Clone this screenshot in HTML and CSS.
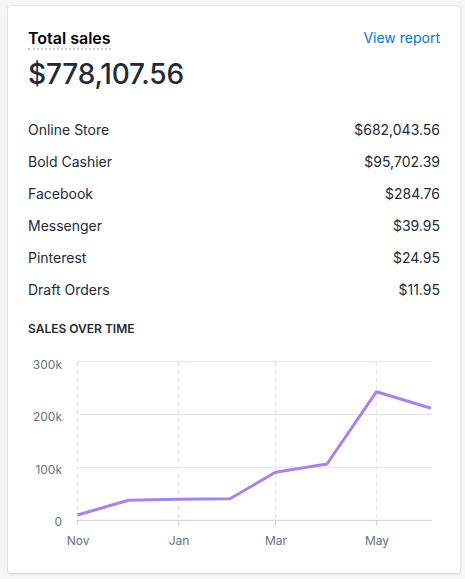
FILE: index.html
```html
<!DOCTYPE html>
<html>
<head>
<meta charset="utf-8">
<link rel="stylesheet" href="styles.css">
</head>
<body>
<div class="card">
  <div class="header">
    <span class="title">Total sales</span>
    <a class="link" href="#">View report</a>
  </div>
  <div class="amount">$778,107.56</div>
  <div class="rows">
    <div class="row"><span>Online Store</span><span>$682,043.56</span></div>
    <div class="row"><span>Bold Cashier</span><span>$95,702.39</span></div>
    <div class="row"><span>Facebook</span><span>$284.76</span></div>
    <div class="row"><span>Messenger</span><span>$39.95</span></div>
    <div class="row"><span>Pinterest</span><span>$24.95</span></div>
    <div class="row"><span>Draft Orders</span><span>$11.95</span></div>
  </div>
  <div class="section">SALES OVER TIME</div>
  <svg class="chart" width="412" height="208" viewBox="0 0 412 208">
    <g class="grid">
      <line x1="49.5" y1="16.7" x2="404" y2="16.7"/>
      <line x1="49.5" y1="69.5" x2="404" y2="69.5"/>
      <line x1="49.5" y1="122.3" x2="404" y2="122.3"/>
    </g>
    <g class="vgrid">
      <line x1="49.5" y1="16.7" x2="49.5" y2="175"/>
      <line x1="150.5" y1="16.7" x2="150.5" y2="175"/>
      <line x1="247.5" y1="16.7" x2="247.5" y2="175"/>
      <line x1="348.5" y1="16.7" x2="348.5" y2="175"/>
    </g>
    <g class="axis">
      <line x1="49.5" y1="175.3" x2="404" y2="175.3"/>
      <line x1="49.5" y1="175" x2="49.5" y2="180"/>
      <line x1="150.5" y1="175" x2="150.5" y2="180"/>
      <line x1="247.5" y1="175" x2="247.5" y2="180"/>
      <line x1="348.5" y1="175" x2="348.5" y2="180"/>
    </g>
    <g class="ylabels">
      <text x="34" y="23.5">300k</text>
      <text x="34" y="76">200k</text>
      <text x="34" y="128.5">100k</text>
      <text x="34" y="181">0</text>
    </g>
    <g class="xlabels">
      <text x="50" y="200">Nov</text>
      <text x="151" y="200">Jan</text>
      <text x="248" y="200">Mar</text>
      <text x="349" y="200">May</text>
    </g>
    <polyline class="series" points="49.5,170 100.5,155.3 150,154.3 202,153.7 247.5,127.3 299,119 348.5,46.7 403,63.3"/>
  </svg>
</div>
</body>
</html>
```
FILE: styles.css
```css
html, body {
  margin: 0;
  padding: 0;
  background: #f4f6f8;
}
body {
  padding: 6px 5px 6px 8px;
  font-family: Inter, "Noto Sans", sans-serif;
  color: #212b36;
}
.card {
  background: #fff;
  border-radius: 3px;
  box-shadow: 0 0 0 1px rgba(63, 63, 68, 0.05), 0 1px 3px 0 rgba(63, 63, 68, 0.15);
  padding: 20px 20px 16px 20px;
  box-sizing: border-box;
  width: 452px;
  height: 567px;
}
.header {
  display: flex;
  justify-content: space-between;
  align-items: center;
  height: 24px;
}
.title {
  font-size: 16px;
  font-weight: 600;
  line-height: 20px;
  color: #000;
  border-bottom: 2px dotted #c4cdd5;
  margin-top: 2px;
}
.link {
  font-size: 14px;
  color: #007ace;
  text-decoration: none;
  line-height: 20px;
}
.amount {
  font-size: 28px;
  font-weight: 500;
  line-height: 32px;
  margin-top: 8px;
  letter-spacing: -0.2px;
}
.rows {
  margin-top: 24px;
}
.row {
  display: flex;
  justify-content: space-between;
  font-size: 14px;
  line-height: 20px;
  padding: 6px 0;
}
.section {
  margin-top: 15px;
  font-size: 12px;
  font-weight: 600;
  line-height: 16px;
}
.chart {
  display: block;
  margin-top: 8px;
}
.grid line {
  stroke: #dfe3e8;
  stroke-width: 1;
}
.vgrid line {
  stroke: #dfe3e8;
  stroke-width: 1;
  stroke-dasharray: 4 4;
}
.axis line {
  stroke: #c3d1ea;
  stroke-width: 1;
}
.ylabels text {
  font-family: Inter, sans-serif;
  font-size: 12px;
  fill: #637381;
  text-anchor: end;
}
.xlabels text {
  font-family: Inter, sans-serif;
  font-size: 12px;
  fill: #637381;
  text-anchor: middle;
}
.series {
  fill: none;
  stroke: #a983e6;
  stroke-width: 3;
  stroke-linejoin: round;
}
```
